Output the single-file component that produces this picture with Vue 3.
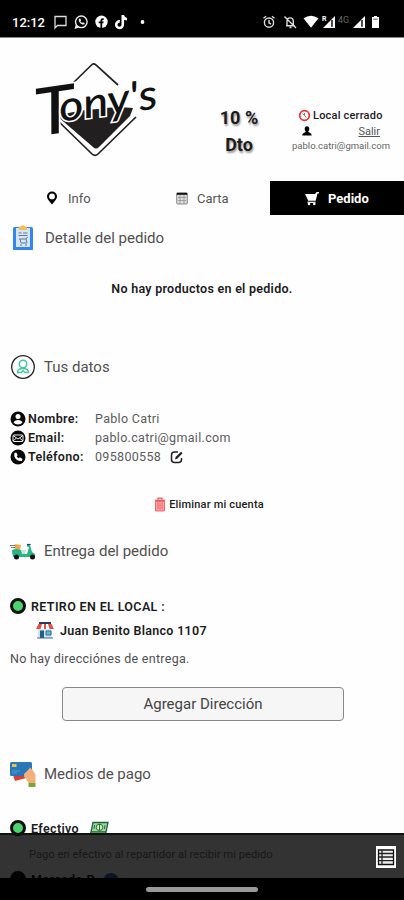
<template>
  <div class="app-screen">
    <header class="status-bar">
      <span class="clock">12:12</span>
      <svg class="status-left" width="94" height="16" viewBox="0 0 94 16">
        <path d="M2 2.5h11v9H4.5L2 14z" fill="none" stroke="#ddd" stroke-width="1.3" />
        <circle cx="28.3" cy="7.8" r="5.8" fill="none" stroke="#eee" stroke-width="1.4" />
        <path d="M21.5 15l1.2-4.2 3 2.8z" fill="#eee" />
        <path d="M26 4.8c-1.2 2.8 2.3 6.4 5.3 5.7l.4-1.4-1.8-.9-.9.9-1.7-1.8.8-.9-.8-1.8z" fill="#eee" />
        <circle cx="48.5" cy="7.8" r="6.2" fill="#fff" />
        <path d="M47.4 14V9.3h-1.7V7.4h1.7c0-2.4.8-3.4 3.3-3.1v1.7c-1.2 0-1.5.2-1.5 1.4h1.5l-.4 1.9h-1.1V14z" fill="#000" />
        <path d="M69.8 1v9.6a3.3 3.3 0 1 1-3-3.2M69.8 1.5c.4 2.3 1.8 3.5 4.2 3.7" fill="none" stroke="#fff" stroke-width="2.6" />
        <circle cx="89.5" cy="8" r="1.9" fill="#fff" />
      </svg>
      <svg class="status-right" width="131" height="16" viewBox="0 0 131 16">
        <g fill="none" stroke="#ddd" stroke-width="1.4">
          <circle cx="7" cy="8.6" r="4.6" />
          <path d="M7 6v3l2 1M1.5 4.2l2.6-2M9.9 2.2l2.6 2" />
          <path d="M24 11.8h8.8M25 11V7.5c0-4.8 6.3-4.8 6.3 0V11M27.5 13.5h2M22.5 2.5l11.5 11.5" />
        </g>
        <path d="M41.5 4.3Q49 -.8 56.5 4.3L49 13.8z" fill="#fff" />
        <path d="M73 2v12H61z" fill="#fff" />
        <path d="M70 6v6.8" stroke="#000" stroke-width="1.4" />
        <text x="60" y="7" class="signal-r">R</text>
        <text x="76" y="9" class="signal-net">4G</text>
        <path d="M103 2v12H91z" fill="#fff" />
        <path d="M100 6v6.8" stroke="#000" stroke-width="1.4" />
        <path d="M110 3h2V2h3v1h2v11h-7z" fill="#fff" />
        <path d="M111.3 5.2h4.4" stroke="#555" />
      </svg>
    </header>

    <main class="content">
      <div class="brand">
        <svg class="logo" width="130" height="104" viewBox="0 0 130 104">
          <g fill="none" stroke="#222" stroke-width="1.7">
            <path d="M39 28L59.5 8q2.2-2.2 4.4 0L86 28" />
            <path d="M22 60l38 37q3 2.8 6 0L104 60" />
          </g>
          <path d="M25 59q20-6 41-7 17-3 35-1l-3 8-31 31q-3 3-6 0z" fill="#211f20" />
          <text class="logo-text" transform="translate(3 0) rotate(-8 60 55) scale(1.12 1)">
            <tspan class="logo-cap" x="0" y="71">T</tspan><tspan x="22" y="60">ony's</tspan>
          </text>
        </svg>
        <div class="discount">10 %<br />Dto</div>
        <div class="account">
          <div class="closed">
            <svg width="13" height="13" viewBox="0 0 13 13">
              <circle cx="6.5" cy="6.5" r="4.8" fill="#fff" stroke="#ee3035" stroke-width="1.7" />
              <path d="M4.5 4.5l4 4M6.5 4v2.5" fill="none" stroke="#ee5559" />
            </svg>
            <span>Local cerrado</span>
          </div>
          <div class="session">
            <svg width="10" height="10" viewBox="0 0 10 10">
              <path d="M2.7 2.7C2.7-.6 7.3-.6 7.3 2.7c0 1.5-.7 2.5-1.2 3 .3 1 3.6.8 3.6 3.8H.3c0-3 3.3-2.8 3.6-3.8-.5-.5-1.2-1.5-1.2-3z" />
            </svg>
            <a class="logout">Salir</a>
          </div>
          <div class="account-mail">pablo.catri@gmail.com</div>
        </div>
      </div>

      <nav class="tabs">
        <a class="tab tab-info">
          <svg width="12" height="14" viewBox="0 0 12 14">
            <path fill-rule="evenodd" d="M6 .5a5 5 0 0 1 5 5C11 8.3 8 10.5 6 13.5 4 10.5 1 8.3 1 5.5a5 5 0 0 1 5-5zM6 2.5a2.9 2.9 0 1 0 0 5.8 2.9 2.9 0 0 0 0-5.8z" />
          </svg>
          <span>Info</span>
        </a>
        <a class="tab tab-menu">
          <svg width="12" height="13" viewBox="0 0 12 13">
            <rect x=".7" y="1" width="10.6" height="11" rx="1" fill="#ddd" stroke="#888" />
            <path d="M.8 1.8h10.4" stroke="#111" stroke-width="2" />
            <path d="M4 3v9M8 3v9M2 5.5h8M2 8.5h8" stroke="#888" stroke-width=".7" />
          </svg>
          <span>Carta</span>
        </a>
        <a class="tab tab-order active">
          <svg width="16" height="15" viewBox="0 0 16 15">
            <path d="M1 3h10l1.7-2H15v1.5h-1.5L11.7 9.8H4L3.5 8 1.5 4z" fill="#fff" />
            <path d="M3.5 11.3h8" stroke="#fff" stroke-width="1.2" />
            <circle cx="5" cy="13" r="1.3" fill="#fff" />
            <circle cx="10.3" cy="13" r="1.3" fill="#fff" />
          </svg>
          <span>Pedido</span>
        </a>
      </nav>

      <section class="detail">
        <h2 class="title title-detail">
          <svg width="26" height="26" viewBox="0 0 26 26">
            <rect x="3" y="2" width="20" height="23" rx="1.5" fill="#3586ee" />
            <path d="M6 3h14v19H6z" fill="#d5e5fa" />
            <path d="M3 22h20v2q0 1-1 1H4q-1 0-1-1z" fill="#3387f5" />
            <path d="M9 1.5h2Q13-.8 15 1.5h2V5H9z" fill="#f5bd52" />
            <path d="M8.5 8h3M13 8h4.5M8.5 10.5h9M9 14h7l1.5-2M10 14l1 4h6l-1-4M10 20h2M15 20h2" fill="none" stroke="#657895" />
          </svg>
          <span>Detalle del pedido</span>
        </h2>
        <p class="empty">No hay productos en el pedido.</p>
      </section>

      <section class="user-data">
        <h2 class="title">
          <svg width="26" height="26" viewBox="0 0 26 26">
            <circle cx="13" cy="13" r="11.3" fill="none" stroke="#222" stroke-width="1.3" />
            <circle cx="13" cy="10" r="3.7" fill="none" stroke="#43c8a0" stroke-width="1.5" />
            <path d="M7.5 18.5c0-3 2.5-4 5.5-4s5.5 1 5.5 4h-3.8l-1.7-2-1.7 2z" fill="none" stroke="#43c8a0" stroke-width="1.3" />
          </svg>
          <span>Tus datos</span>
        </h2>
        <div class="fields">
          <div v-for="field in fields" :key="field.label" class="field">
            <svg width="16" height="16" viewBox="0 0 16 16">
              <circle cx="8" cy="8" r="7.5" fill="#080808" />
              <g v-if="field.icon === 'user'" fill="#fff">
                <circle cx="8" cy="5.5" r="2.5" />
                <path d="M3.5 11.5c1-3.5 8-3.5 9 0-2 2.5-7 2.5-9 0z" />
              </g>
              <g v-else-if="field.icon === 'mail'" fill="none" stroke="#eee">
                <rect x="3" y="5" width="10" height="6.5" rx="1" />
                <path d="M3 5.5l5 3.5 5-3.5M3 11l3.5-3M13 11L9.5 8" />
              </g>
              <path v-else d="M4.5 4l1.7-.5 1.5 2.7-1 1c.5 1 1.2 1.6 2.2 2.1l1-1L12.5 10l-.5 1.8C7.5 13.2 3 8.5 4.5 4z" fill="#fff" />
            </svg>
            <b class="label">{{ field.label }}</b>
            <span class="value">{{ field.value }}</span>
            <svg v-if="field.icon === 'phone'" class="edit" width="14" height="14" viewBox="0 0 14 14">
              <path d="M8 2H4.5Q1.5 2 1.5 5v4.5q0 3 3 3H8.5q3 0 3-3V8" fill="none" stroke="#222" stroke-width="1.5" />
              <path d="M5 9.5l.6-2.5L11 1.8l1.5 1.5L7.2 8.7z" fill="#222" />
            </svg>
          </div>
        </div>
        <div class="remove">
          <svg width="12" height="15" viewBox="0 0 12 15">
            <path d="M1.5 4.5h9V14h-9z" fill="#f99da0" stroke="#f3696e" />
            <path d="M.8 3.3h10.4M4 3V1.2h4V3" fill="none" stroke="#ef5b61" stroke-width="1.3" />
            <path d="M4 6v6M6 6v6M8 6v6" stroke="#ef646a" stroke-width=".8" />
          </svg>
          <span>Eliminar mi cuenta</span>
        </div>
      </section>

      <section class="delivery">
        <h2 class="title">
          <svg width="26" height="26" viewBox="0 0 26 26">
            <path d="M0 7.5h5M1 9.5h4" stroke="#777" />
            <path d="M5 6l6 1-1 5-5-1z" fill="#efaa4b" />
            <path d="M2 12q4-2 9 0l2 4h4l2-7-2-.5V7h3l2 7 3 2v3H3q-1-4-1-7z" fill="#29b486" />
            <path d="M17 6.5h3.5" stroke="#336" stroke-width="1.2" />
            <path d="M11 12h5l-1 4h-3z" fill="#bcebdc" />
            <circle cx="6.5" cy="19" r="2.5" fill="#111" />
            <circle cx="22.5" cy="19" r="2.5" fill="#111" />
          </svg>
          <span>Entrega del pedido</span>
        </h2>
        <div class="option pickup">
          <i class="radio"></i>
          <b>RETIRO EN EL LOCAL :</b>
        </div>
        <div class="address">
          <svg width="18" height="18" viewBox="0 0 18 18">
            <path d="M3 1h12v2H3z" fill="#243b5b" />
            <path d="M2 7h14v10H2z" fill="#c9e7f4" />
            <path d="M4 9.5h4V17H4z" fill="#285d83" />
            <path d="M10 10h5v4h-5z" fill="#6ab6da" stroke="#326e93" />
            <path d="M2.5 3h13L18 8H0z" fill="#e94d43" />
            <path d="M6 3h2v5H4.5zM10 3h2l1.5 5H10z" fill="#fff" />
            <path d="M1 17h16" stroke="#456983" />
          </svg>
          <b>Juan Benito Blanco 1107</b>
        </div>
        <p class="no-address">No hay direcciónes de entrega.</p>
        <button class="add-btn">Agregar Dirección</button>
      </section>

      <section class="payment">
        <h2 class="title">
          <svg width="28" height="28" viewBox="0 0 28 28">
            <path d="M3 15l16-2 1 4-15 4z" fill="#d63f31" />
            <rect x="0" y="2" width="22" height="14" rx="1.5" fill="#2878b9" />
            <rect x="2" y="4" width="4.5" height="3" fill="#e8c056" />
            <path d="M2 11h8M2 13h5" stroke="#4e9bd1" />
            <path d="M14 14l5-5 1-1.5 3 3 2.5 4V23h-7l-3-5q-2-1-1.5-4z" fill="#f2b07d" />
            <path d="M18.5 23h7v4h-7z" fill="#72a83c" />
          </svg>
          <span>Medios de pago</span>
        </h2>
        <div class="option cash">
          <i class="radio"></i>
          <b>Efectivo</b>
          <svg width="20" height="15" viewBox="0 0 20 15">
            <path d="M4 1.5h15l-2 9.5H2z" fill="#9bdc9a" stroke="#23623e" stroke-width="1.3" />
            <path d="M2 11l-1 2.5h15l1-2.5" fill="#4c9b62" stroke="#23623e" />
            <ellipse cx="10.5" cy="6.3" rx="3.3" ry="3.2" fill="#d3f2b9" stroke="#286b43" />
            <path d="M10.5 3v6.5M5.5 4L5 8M16 4l-.5 4" stroke="#286b43" />
          </svg>
        </div>
        <p class="hint">Pago en efectivo al repartidor al recibir mi pedido</p>
        <div class="option card">
          <i class="radio"></i>
          <b>Mercado P.</b>
          <i class="card-icon"></i>
        </div>
      </section>
    </main>

    <div class="bottom-bar">
      <svg width="20" height="22" viewBox="0 0 20 22">
        <path d="M0 0h20v22H0z" fill="#fff" />
        <path d="M2.5 4h15v14.5h-15z" fill="#eee" stroke="#111" stroke-width="1.3" />
        <path d="M6 4v14.5M3 7.5h14M3 11h14M3 14.7h14" stroke="#222" stroke-width="1.3" />
      </svg>
    </div>
    <footer class="system-nav"><span class="pill"></span></footer>
  </div>
</template>

<script setup>
const fields = [
  { icon: 'user', label: 'Nombre:', value: 'Pablo Catri' },
  { icon: 'mail', label: 'Email:', value: 'pablo.catri@gmail.com' },
  { icon: 'phone', label: 'Teléfono:', value: '095800558' }
]
</script>

<style>
body {
  margin: 0;
  background: #fff;
}
</style>

<style scoped>
.app-screen {
  position: relative;
  display: flex;
  flex-direction: column;
  width: 404px;
  height: 900px;
  overflow: hidden;
  background: #fefefe;
  font-family: Roboto, "Liberation Sans", sans-serif;
  color: #1c1c1c;
}

svg {
  flex: none;
}

p,
h2 {
  margin: 0;
}

.status-bar {
  display: flex;
  align-items: center;
  flex: none;
  height: 38px;
  box-sizing: border-box;
  padding: 7px 11px 0 12px;
  background: #000;
  border-bottom: 1px solid #888;
  color: #fff;
}

.clock {
  width: 41px;
  font-size: 13px;
  font-weight: 500;
}

.status-right {
  margin-left: auto;
}

.signal-r {
  font-size: 7px;
  font-weight: bold;
  fill: #fff;
}

.signal-net {
  font-size: 9px;
  fill: #666;
}

.content {
  flex: 1;
  min-height: 0;
  overflow: hidden;
}

.brand {
  display: flex;
  height: 143px;
}

.logo {
  margin: 19px 0 0 32px;
}

.logo-text {
  font-family: Lato, "Liberation Sans", sans-serif;
  font-size: 42px;
  font-style: italic;
  font-weight: 500;
  fill: #111;
  stroke: #fff;
  stroke-width: 3px;
  paint-order: stroke;
}

.logo-cap {
  font-size: 66px;
}

.discount {
  width: 80px;
  margin: 66px 0 0 37px;
  text-align: center;
  font-size: 18px;
  font-weight: bold;
  line-height: 27px;
  text-shadow: 1px 2px 2px #999;
}

.account {
  width: 106px;
  margin: 69px 0 0 9px;
}

.closed {
  display: flex;
  align-items: center;
  gap: 2px;
  height: 16px;
  padding-left: 10px;
  font-size: 11px;
  font-weight: 500;
  letter-spacing: 0.2px;
  white-space: nowrap;
}

.session {
  display: flex;
  align-items: center;
  justify-content: space-between;
  height: 16px;
  padding: 0 14px 0 14px;
}

.logout {
  font-size: 11px;
  color: #555;
  text-decoration: underline;
}

.account-mail {
  height: 13px;
  padding-left: 4px;
  font-size: 9.5px;
  line-height: 13px;
  color: #666;
  white-space: nowrap;
}

.tabs {
  display: flex;
  height: 34px;
}

.tab {
  display: flex;
  align-items: center;
  box-sizing: border-box;
  width: 135px;
  font-size: 13px;
  color: #555;
}

.tab-info {
  padding-left: 46px;
  gap: 10px;
}

.tab-menu {
  padding-left: 41px;
  gap: 9px;
}

.tab.active {
  width: 134px;
  padding-left: 34px;
  gap: 8px;
  background: #000;
  color: #fff;
  font-weight: bold;
}

.title {
  display: flex;
  align-items: center;
  gap: 8px;
  height: 46px;
  padding-left: 10px;
  font-size: 15px;
  font-weight: 400;
  color: #505050;
}

.title-detail {
  gap: 9px;
}

.empty {
  height: 56px;
  line-height: 56px;
  text-align: center;
  font-size: 12.5px;
  font-weight: 600;
  letter-spacing: 0.27px;
}

.user-data {
  margin-top: 27px;
}

.fields {
  margin-top: 19px;
  padding-left: 10px;
}

.field {
  display: flex;
  align-items: center;
  height: 19px;
  font-size: 12.5px;
  letter-spacing: 0.32px;
}

.label {
  width: 67px;
  margin-left: 2px;
  font-weight: 600;
}

.value {
  color: #5c5c5c;
}

.edit {
  margin-left: 9px;
}

.remove {
  display: flex;
  align-items: center;
  justify-content: center;
  gap: 3px;
  height: 48px;
  margin-top: 14px;
  padding-left: 14px;
  font-size: 11px;
  font-weight: 500;
  letter-spacing: 0.18px;
}

.option {
  display: flex;
  align-items: center;
  height: 24px;
  padding-left: 10px;
  gap: 5px;
  font-size: 12.5px;
  letter-spacing: 0.36px;
}

.option b {
  font-weight: 600;
}

.radio {
  flex: none;
  box-sizing: border-box;
  width: 16px;
  height: 16px;
  border: 3.5px solid #111;
  border-radius: 50%;
  background: #4bd36c;
}

.pickup {
  margin-top: 20px;
}

.address {
  display: flex;
  align-items: center;
  height: 24px;
  gap: 6px;
  padding-left: 36px;
  font-size: 12.5px;
  letter-spacing: 0.3px;
}

.address b {
  font-weight: 600;
}

.no-address {
  height: 34px;
  padding-left: 10px;
  font-size: 12.5px;
  line-height: 34px;
  letter-spacing: 0.28px;
  color: #505050;
}

.add-btn {
  display: block;
  width: 282px;
  height: 34px;
  margin: 11px 0 0 62px;
  padding: 0;
  border: 1px solid #888;
  border-radius: 4px;
  background: #f6f6f6;
  font-family: inherit;
  font-size: 15px;
  color: #444;
}

.payment {
  margin-top: 30px;
}

.payment .title {
  gap: 6px;
}

.cash {
  margin-top: 19px;
}

.cash svg {
  margin-left: 5px;
}

.hint {
  height: 27px;
  padding-left: 29px;
  line-height: 29px;
  font-size: 11.2px;
  color: #777;
}

.card .radio {
  background: #111;
}

.card-icon {
  width: 14px;
  height: 12px;
  margin-left: 3px;
  border-radius: 50%;
  background: #2868c0;
}

/* translucent bar over the scrolled list */
.bottom-bar {
  position: absolute;
  left: 0;
  right: 0;
  bottom: 22px;
  display: flex;
  align-items: center;
  justify-content: flex-end;
  box-sizing: border-box;
  height: 45px;
  padding-right: 8px;
  border-top: 2px solid #111;
  background: rgba(0, 0, 0, 0.8);
}

.system-nav {
  display: flex;
  justify-content: center;
  flex: none;
  height: 22px;
  background: #000;
}

.pill {
  width: 112px;
  height: 5px;
  margin-top: 9px;
  border-radius: 3px;
  background: #999;
}
</style>
